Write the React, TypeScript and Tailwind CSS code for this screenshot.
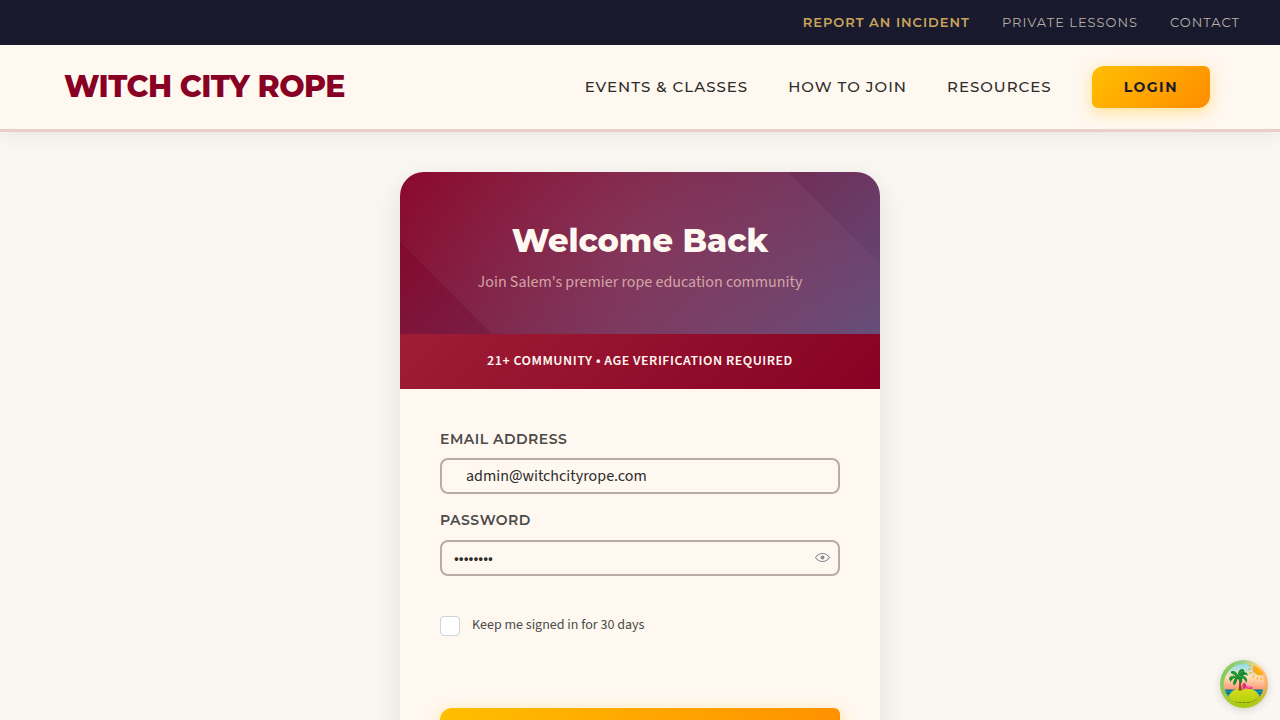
import { useId, useState } from "react";

const heading = "font-['Montserrat',sans-serif]";
const goldButton =
  "rounded-[12px_6px_12px_6px] bg-[linear-gradient(135deg,#ffbf00,#ff8c00)] shadow-[0_4px_15px_rgba(255,191,0,0.4)]";
const fieldLabel = `${heading} block text-sm font-semibold uppercase leading-5 tracking-[0.5px] text-[#4a4a4a]`;

function UtilityBar() {
  return (
    <div className={`${heading} flex h-[45px] shrink-0 items-center justify-end gap-8 bg-[#1a1a2e] px-10 text-[13px] uppercase tracking-[1px] text-[#b8b0a8]`}>
      <a href="#incident" className="font-semibold text-[#c9a55c]">Report an Incident</a>
      <a href="#lessons">Private Lessons</a>
      <a href="#contact">Contact</a>
    </div>
  );
}

function Header() {
  return (
    <header className={`${heading} relative flex shrink-0 items-center justify-between border-b-3 border-[#b76d75]/30 bg-[#fff8f0] py-[21px] pl-16 pr-[70px] shadow-[0_2px_20px_rgba(0,0,0,0.08)]`}>
      <a href="#home" className="text-[30px] font-extrabold leading-[42px] tracking-[-0.5px] text-[#880124]">WITCH CITY ROPE</a>
      <nav className="flex items-center gap-10 text-[15px] font-medium uppercase tracking-[1px] text-[#2b2b2b]">
        <a href="#events">Events &amp; Classes</a>
        <a href="#join">How to Join</a>
        <a href="#resources">Resources</a>
        <a href="#login" className={`${goldButton} flex h-[42px] items-center px-8 text-sm font-bold tracking-[1.5px] text-[#1a1a2e]`}>Login</a>
      </nav>
    </header>
  );
}

function EyeIcon() {
  return (
    <svg viewBox="0 0 15 15" className="size-[15px]" fill="currentColor" aria-hidden="true">
      <path fillRule="evenodd" clipRule="evenodd" d="M7.5 11C4.80285 11 2.52952 9.62184 1.09622 7.50001C2.52952 5.37816 4.80285 4 7.5 4C10.1971 4 12.4705 5.37816 13.9038 7.50001C12.4705 9.62183 10.1971 11 7.5 11ZM7.5 3C4.30786 3 1.65639 4.70638 0.0760002 7.23501C-0.0253338 7.39715 -0.0253334 7.60288 0.0760014 7.76501C1.65639 10.2936 4.30786 12 7.5 12C10.6921 12 13.3436 10.2936 14.924 7.76501C15.0253 7.60288 15.0253 7.39715 14.924 7.23501C13.3436 4.70638 10.6921 3 7.5 3ZM7.5 9.5C8.60457 9.5 9.5 8.60457 9.5 7.5C9.5 6.39543 8.60457 5.5 7.5 5.5C6.39543 5.5 5.5 6.39543 5.5 7.5C5.5 8.60457 6.39543 9.5 7.5 9.5Z" />
    </svg>
  );
}

function IslandIcon() {
  return (
    <svg viewBox="0 0 48 48" className="size-12" aria-hidden="true">
      <defs>
        <linearGradient id="ring" x1="0.05" y1="0.2" x2="1" y2="0.6">
          <stop offset="0" stopColor="#84c84a" />
          <stop offset="0.3" stopColor="#96d08a" />
          <stop offset="0.65" stopColor="#ffd98a" />
          <stop offset="1" stopColor="#f9a468" />
        </linearGradient>
        <linearGradient id="ringLow" x1="0" y1="0" x2="0" y2="1">
          <stop offset="0.5" stopColor="#9fc400" stopOpacity="0" />
          <stop offset="0.95" stopColor="#a5cc10" />
        </linearGradient>
        <linearGradient id="sky" x1="0" y1="0" x2="0" y2="1">
          <stop offset="0.08" stopColor="#8adff0" />
          <stop offset="0.36" stopColor="#ffdfb5" />
          <stop offset="0.7" stopColor="#ff8069" />
        </linearGradient>
        <linearGradient id="sand" x1="0.4" y1="0" x2="0.6" y2="1">
          <stop offset="0" stopColor="#d8dc20" />
          <stop offset="1" stopColor="#a8cc00" />
        </linearGradient>
        <linearGradient id="sun" x1="0" y1="1" x2="1" y2="0">
          <stop offset="0" stopColor="#ff9a00" />
          <stop offset="1" stopColor="#ffc23c" />
        </linearGradient>
        <clipPath id="disc"><circle cx="24" cy="24" r="20" /></clipPath>
      </defs>
      <circle cx="24" cy="24" r="24" fill="url(#ring)" />
      <circle cx="24" cy="24" r="24" fill="url(#ringLow)" />
      <g clipPath="url(#disc)">
        <path fill="url(#sky)" d="M0 0h48v48H0z" />
        <path fill="#00718e" d="M0 29.500h48v8H0z" />
        <path d="M3 31.500q2-1.500 4 0t4 0 4 0M32 31.500q2-1.500 4 0t4 0 4 0M3 34.500q2-1.500 4 0t4 0M35 34.500q2-1.500 4 0t4 0" fill="none" stroke="#24b8cc" strokeWidth="0.9" />
        <path d="M7 39C10 31 17 27.500 24 27.500S38 31 41 39v9H7z" fill="url(#sand)" />
        <path d="M7.500 38.500q3 1.500 5 2.700t6 1.300h9q4 0 6.500-1.500t6-2.500" fill="none" stroke="#467f08" strokeWidth="0.8" strokeDasharray="3 1" />
      </g>
      <path d="M33.500 6A7 7 0 0 0 43.500 14.500 23 23 0 0 0 33.500 6Z" fill="url(#sun)" />
      <path d="M34 5a7 7 0 0 0 0 7.500l9.500 1.500A22 22 0 0 0 34 5Z" fill="url(#sun)" />
      <path d="M31 6l-2-.5M30.500 9l-2 .5M31.500 12.500l-2 1M34 15.500l-1.200 1.800M37.500 17.300l-.5 2M41 17.500l.3 2" stroke="#ffa51e" strokeWidth="1.100" strokeLinecap="round" />
      <path d="M18 16q2 6 .5 14.500h3.500q-1-8-2.500-14.500z" fill="#96481f" />
      <path d="M17.700 14.700q-2-4-5.200-3.700-2.500.5-1 2.500 2.500.5 4 2.500-5.500-1-6.500 2.500l1.500 3.500q2-4 5-4-3.500 3.500-2 7.500 3-1.500 4-6.500 2.500 0 3 5 2.500-1.500 1.500-5.500 3 0 4 4.500 2.500-3-.5-6l-2.500-1.500q3-1.500 5 .5-.5-3.500-3.500-4 0-2.500-2-3-4 0-4.800 5.700z" fill="#168a32" />
      <path d="M13 12.500q3 1 4.500 3M10.500 18q3-2 6.500-1M18 15q2-3 5-4M18.500 16q3 0 6 2.500" stroke="#55b83c" strokeWidth="0.7" fill="none" />
      <path d="m22.500 24.500 1-1.500h1.500l1.500 3 5.500.5 .5 1.500-1 1h-7l-2 1z" fill="#e8287a" />
      <path d="m26 26 6 .5M24.500 28.500l6-1" stroke="#ffb2c8" strokeWidth="0.600" />
    </svg>
  );
}

function LoginCard() {
  const emailId = useId();
  const passwordId = useId();
  const [email, setEmail] = useState("admin@witchcityrope.com");
  const [password, setPassword] = useState("password");
  const [visible, setVisible] = useState(false);
  return (
    <section className="w-full max-w-[480px] overflow-hidden rounded-3xl bg-[#fff8f0] shadow-[0_10px_30px_rgba(0,0,0,0.1)]">
      <div className="relative overflow-hidden bg-[linear-gradient(135deg,#880124,#614b79)] px-10 pt-12 pb-10 text-center">
        <div className="absolute -left-1/2 -top-1/2 h-[200%] w-[200%] rotate-45 bg-[radial-gradient(circle,rgba(180,112,135,0.23)_0%,transparent_70%)]" />
        <div className="relative">
          <h1 className={`${heading} text-[32px] font-extrabold leading-[42px] text-[#fff8f0]`}>Welcome Back</h1>
          <p className="mt-2 text-base leading-6 text-[#d4a5a5]">Join Salem's premier rope education community</p>
        </div>
      </div>
      <p className="bg-[linear-gradient(135deg,#9f1d35,#880124)] px-6 py-4 text-center text-sm font-semibold uppercase leading-[23px] tracking-[0.5px] text-[#fff8f0]">21+ Community • Age Verification Required</p>
      <form className="p-10" onSubmit={(e) => e.preventDefault()}>
        <label htmlFor={emailId} className={fieldLabel}>Email Address</label>
        <input id={emailId} type="email" value={email} onChange={(e) => setEmail(e.target.value)} className="mt-[9px] block h-9 w-full rounded-lg border-2 border-[#b8aca5] px-6 text-base text-[#2b2b2b]" />
        <label htmlFor={passwordId} className={`${fieldLabel} mt-4`}>Password</label>
        <div className="mt-[10px] flex h-9 items-center rounded-lg border-2 border-[#b8aca5] pl-3 pr-2">
          <input id={passwordId} type={visible ? "text" : "password"} value={password} onChange={(e) => setPassword(e.target.value)} className="min-w-0 flex-1 text-base text-[#2b2b2b] outline-none" />
          <button type="button" aria-label="Toggle password visibility" onClick={() => setVisible(!visible)} className="pb-0.5 text-[#868e96]"><EyeIcon /></button>
        </div>
        <label className="mt-10 flex items-start gap-3 text-sm leading-[18px] text-[#4a4a4a]">
          <input type="checkbox" className="size-5 appearance-none rounded border border-[#ced4da] bg-white checked:bg-[#880124]" />
          Keep me signed in for 30 days
        </label>
        <button type="submit" aria-label="Sign in" className={`${goldButton} mt-[72px] block h-14 w-full`} />
      </form>
    </section>
  );
}

export default function App() {
  return (
    <div className="flex h-screen flex-col overflow-hidden bg-[#faf6f2] font-['Source_Sans_3','Source_Sans_Pro','Noto_Sans_CJK_SC',sans-serif]">
      <UtilityBar />
      <Header />
      <main className="flex justify-center px-4 py-10"><LoginCard /></main>
      <button type="button" aria-label="Open query tools" className="fixed bottom-3 right-3 rounded-full shadow-[0_2px_8px_rgba(0,0,0,0.15)]"><IslandIcon /></button>
    </div>
  );
}
